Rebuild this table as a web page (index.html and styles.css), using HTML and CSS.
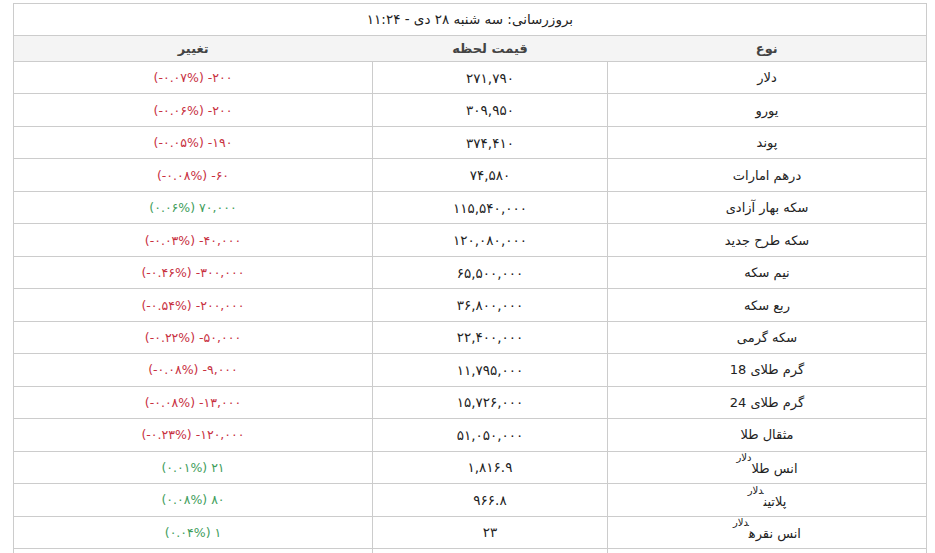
FILE: index.html
```html
<!DOCTYPE html>
<html lang="fa" dir="rtl">
<head>
<meta charset="utf-8">
<title>قیمت ارز و سکه</title>
<link rel="stylesheet" href="styles.css">
</head>
<body>
<div class="wrap">
<table class="rates">
  <colgroup>
    <col class="c-name">
    <col class="c-price">
    <col class="c-change">
  </colgroup>
  <thead>
    <tr class="title-row"><th colspan="3">بروزرسانی: سه شنبه ۲۸ دی - ۱۱:۲۴</th></tr>
    <tr class="head-row"><th>نوع</th><th>قیمت لحظه</th><th>تغییر</th></tr>
  </thead>
  <tbody>
    <tr><td>دلار</td><td class="num">۲۷۱,۷۹۰</td><td class="chg down"><span>(-۰.۰۷%)</span> <span>-۲۰۰</span></td></tr>
    <tr><td>یورو</td><td class="num">۳۰۹,۹۵۰</td><td class="chg down"><span>(-۰.۰۶%)</span> <span>-۲۰۰</span></td></tr>
    <tr><td>پوند</td><td class="num">۳۷۴,۴۱۰</td><td class="chg down"><span>(-۰.۰۵%)</span> <span>-۱۹۰</span></td></tr>
    <tr><td>درهم امارات</td><td class="num">۷۴,۵۸۰</td><td class="chg down"><span>(-۰.۰۸%)</span> <span>-۶۰</span></td></tr>
    <tr><td>سکه بهار آزادی</td><td class="num">۱۱۵,۵۴۰,۰۰۰</td><td class="chg up"><span>(۰.۰۶%)</span> <span>۷۰,۰۰۰</span></td></tr>
    <tr><td>سکه طرح جدید</td><td class="num">۱۲۰,۰۸۰,۰۰۰</td><td class="chg down"><span>(-۰.۰۳%)</span> <span>-۴۰,۰۰۰</span></td></tr>
    <tr><td>نیم سکه</td><td class="num">۶۵,۵۰۰,۰۰۰</td><td class="chg down"><span>(-۰.۴۶%)</span> <span>-۳۰۰,۰۰۰</span></td></tr>
    <tr><td>ربع سکه</td><td class="num">۳۶,۸۰۰,۰۰۰</td><td class="chg down"><span>(-۰.۵۴%)</span> <span>-۲۰۰,۰۰۰</span></td></tr>
    <tr><td>سکه گرمی</td><td class="num">۲۲,۴۰۰,۰۰۰</td><td class="chg down"><span>(-۰.۲۲%)</span> <span>-۵۰,۰۰۰</span></td></tr>
    <tr><td>گرم طلای 18</td><td class="num">۱۱,۷۹۵,۰۰۰</td><td class="chg down"><span>(-۰.۰۸%)</span> <span>-۹,۰۰۰</span></td></tr>
    <tr><td>گرم طلای 24</td><td class="num">۱۵,۷۲۶,۰۰۰</td><td class="chg down"><span>(-۰.۰۸%)</span> <span>-۱۳,۰۰۰</span></td></tr>
    <tr><td>مثقال طلا</td><td class="num">۵۱,۰۵۰,۰۰۰</td><td class="chg down"><span>(-۰.۲۳%)</span> <span>-۱۲۰,۰۰۰</span></td></tr>
    <tr><td class="sup-cell">انس طلا<sup>دلار</sup></td><td class="num">۱,۸۱۶.۹</td><td class="chg up"><span>(۰.۰۱%)</span> <span>۲۱</span></td></tr>
    <tr><td class="sup-cell">پلاتین<sup>دلار</sup></td><td class="num">۹۶۶.۸</td><td class="chg up"><span>(۰.۰۸%)</span> <span>۸۰</span></td></tr>
    <tr><td class="sup-cell">انس نقره<sup>دلار</sup></td><td class="num">۲۳</td><td class="chg up"><span>(۰.۰۴%)</span> <span>۱</span></td></tr>
    <tr><td>&nbsp;</td><td class="num">&nbsp;</td><td class="chg">&nbsp;</td></tr>
  </tbody>
</table>
</div>
</body>
</html>
```

FILE: styles.css
```css
html, body {
  margin: 0;
  padding: 0;
  background: #ffffff;
}
body {
  font-family: "DejaVu Sans", "Noto Sans", sans-serif;
  font-size: 13px;
  color: #222222;
}
.wrap {
  padding: 3px 8px 0 14px;
}
.rates {
  width: 913px;
  border-collapse: collapse;
  table-layout: fixed;
  direction: rtl;
}
.c-name { width: 319px; }
.c-price { width: 235px; }
.c-change { width: 359px; }

.rates th,
.rates td {
  border: 1px solid #cccccc;
  padding: 0 8px;
  text-align: center;
  vertical-align: middle;
}
.title-row th {
  height: 29px;
  font-weight: normal;
  color: #222222;
  font-size: 13.5px;
  line-height: 16px;
  padding-bottom: 2px;
}
.head-row th {
  height: 25px;
  line-height: 16px;
  background: #f4f4f4;
  font-weight: bold;
  color: #444444;
  border-left: none;
  border-right: none;
}
.head-row th:first-child { border-right: 1px solid #cccccc; }
.head-row th:last-child { border-left: 1px solid #cccccc; }

.rates tbody tr { height: 32.47px; }

.num { direction: ltr; color: #222222; font-size: 13.5px; }
.chg { direction: ltr; font-size: 12.5px; }
.chg.down { color: #c8313f; }
.chg.up { color: #3f9e5c; }

.sup-cell { padding-top: 6px; }
.sup-cell sup {
  font-size: 10px;
  vertical-align: 12px;
  line-height: 0;
}
```
